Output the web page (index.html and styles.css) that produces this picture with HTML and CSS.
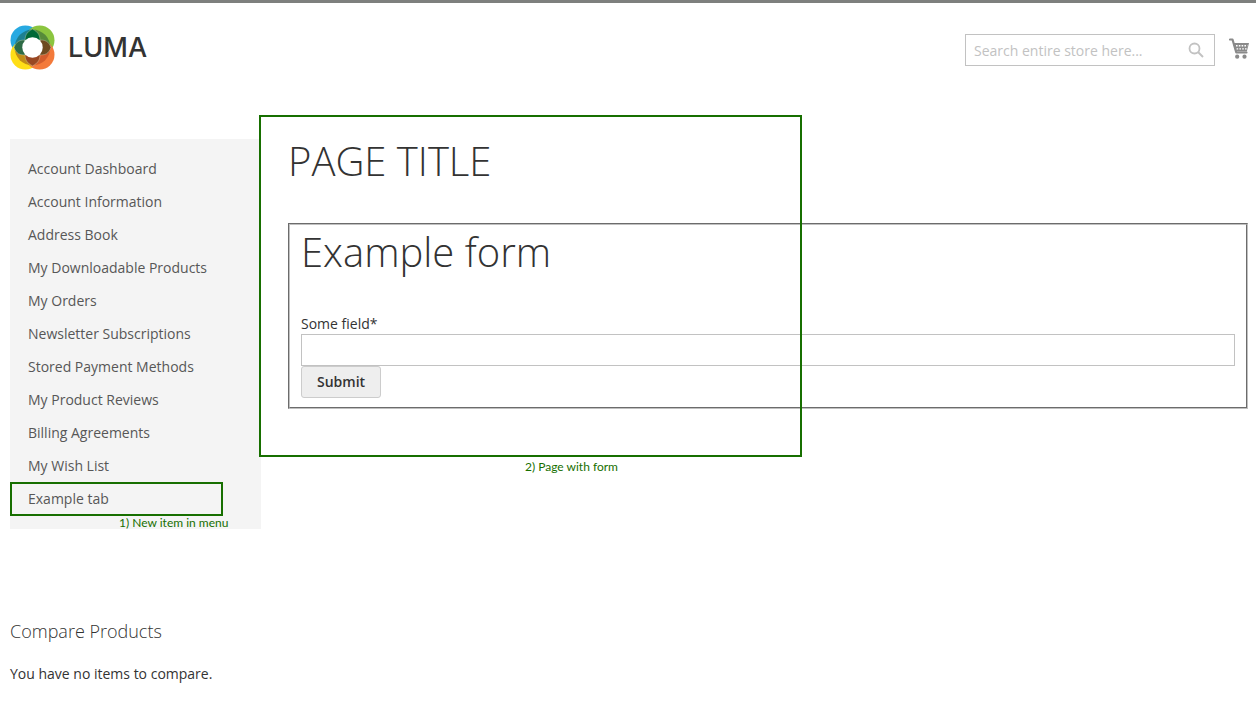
FILE: index.html
```html
<!DOCTYPE html>
<html lang="en">
<head>
<meta charset="utf-8">
<title>Page Title</title>
<link rel="stylesheet" href="styles.css">
</head>
<body>
<header class="header">
  <a class="logo" href="#" aria-label="Luma">
    <svg class="logo-mark" viewBox="0 0 44 44" aria-hidden="true">
      <defs>
        <clipPath id="ring-clip"><circle cx="22" cy="22" r="17.500"/></clipPath>
      </defs>
      <circle cx="15" cy="15" r="14.500" fill="#27a9e1"/>
      <circle cx="29" cy="15" r="14.500" fill="#8bc53f"/>
      <circle cx="15" cy="29" r="14.500" fill="#ffde17"/>
      <circle cx="29" cy="29" r="14.500" fill="#f37a3b"/>
      <g clip-path="url(#ring-clip)">
        <path d="M4 4h18v18H4z" fill="#1d8091"/>
        <path d="M22 4h18v18H22z" fill="#568b3a"/>
        <path d="M4 22h18v18H4z" fill="#c18c16"/>
        <path d="M22 22h18v18H22z" fill="#d35c2c"/>
      </g>
      <g stroke="#c9d6b4" stroke-width=".4">
        <path d="M4 22c2-6 6-8 12-7v14c-6 1-10-1-12-7" fill="#2d6b46"/>
        <path d="M40 22c-2-6-6-8-12-7v14c6 1 10-1 12-7" fill="#6d4a20"/>
        <path d="M22 4c6 3 8 7 7 13H15c-1-6 1-10 7-13" fill="#006837"/>
        <path d="M22 40c-6-3-8-7-7-13h14c1 6-1 10-7 13" fill="#994722"/>
      </g>
      <circle cx="22" cy="22" r="10" fill="#fff"/>
    </svg>
    <span class="logo-name">LUMA</span>
  </a>
  <form class="header-tools" role="search">
    <div class="search">
      <input class="search-input" type="search" aria-label="Search" placeholder="Search entire store here...">
      <button class="icon-button" type="button" aria-label="Search">
        <svg class="search-icon" viewBox="0 0 16 16" aria-hidden="true"><circle cx="6.500" cy="6.500" r="5" fill="none" stroke="#c2c2c2" stroke-width="1.800"/><path d="M10 10l5 5" stroke="#c2c2c2" stroke-width="2"/></svg>
      </button>
    </div>
    <a class="cart" href="#" aria-label="My cart">
      <svg class="cart-icon" viewBox="0 0 20 21" aria-hidden="true">
        <path d="M1 1.500h2.500L7.300 14.500h10.200" fill="none" stroke="#8a8a8a" stroke-width="2.200" stroke-linecap="round" stroke-linejoin="round"/>
        <path d="M4 5h16l-2.200 8.500H6.500z" fill="#8a8a8a"/>
        <path d="M7 7.800h11.500M7.600 10.900h10" stroke="#fff" stroke-width="1.400" stroke-dasharray="1.600 1.200"/>
        <circle cx="8.200" cy="18.700" r="2.100" fill="#8a8a8a"/><circle cx="15.500" cy="18.700" r="2.100" fill="#8a8a8a"/>
      </svg>
    </a>
  </form>
</header>
<div class="columns">
  <aside class="sidebar">
    <nav class="account-nav" aria-label="Account">
      <ul class="nav-list">
        <li class="nav-item"><a href="#">Account Dashboard</a></li>
        <li class="nav-item"><a href="#">Account Information</a></li>
        <li class="nav-item"><a href="#">Address Book</a></li>
        <li class="nav-item"><a href="#">My Downloadable Products</a></li>
        <li class="nav-item"><a href="#">My Orders</a></li>
        <li class="nav-item"><a href="#">Newsletter Subscriptions</a></li>
        <li class="nav-item"><a href="#">Stored Payment Methods</a></li>
        <li class="nav-item"><a href="#">My Product Reviews</a></li>
        <li class="nav-item"><a href="#">Billing Agreements</a></li>
        <li class="nav-item"><a href="#">My Wish List</a></li>
        <li class="nav-item marked"><a href="#">Example tab</a><span class="mark mark-tab"></span><span class="note note-tab">1) New item in menu</span></li>
      </ul>
    </nav>
    <section class="compare">
      <h2 class="compare-title">Compare Products</h2>
      <p class="compare-text">You have no items to compare.</p>
    </section>
  </aside>
  <main class="content">
    <h1 class="title">PAGE TITLE</h1>
    <form class="example-form">
      <h2 class="title form-title">Example form</h2>
      <label class="field-label" for="some-field">Some field*</label>
      <input class="field-input" id="some-field" type="text">
      <button class="submit" type="button">Submit</button>
    </form>
    <span class="mark mark-page"></span>
    <span class="note note-page">2) Page with form</span>
  </main>
</div>
</body>
</html>
```
FILE: styles.css
```css
* { box-sizing: border-box; }
body {
  margin: 0;
  border-top: 3px solid #7e807e;
  font: 14px/20px "Open Sans", "Noto Sans", sans-serif;
  color: #333;
  background: #fff;
}
a { color: inherit; text-decoration: none; }
.header {
  display: flex;
  justify-content: space-between;
  align-items: flex-start;
  padding: 22px 7px 0 10px;
}
.logo { display: flex; align-items: center; gap: 13px; }
.logo-mark { width: 45px; height: 45px; }
.logo-name { font: 500 27px/44px Inter, sans-serif; color: #333; }
.header-tools { display: flex; align-items: center; gap: 14px; padding-top: 9px; }
.search {
  display: flex;
  align-items: center;
  width: 250px;
  height: 32px;
  border: 1px solid #c2c2c2;
  padding: 0 10px 0 8px;
}
.search-input {
  flex: 1;
  min-width: 0;
  border: 0;
  padding: 2px 0 0;
  font: inherit;
  background: none;
}
.search-input::placeholder { color: #c2c2c2; }
.icon-button { display: flex; border: 0; padding: 0; background: none; }
.search-icon { width: 16px; height: 16px; }
.cart { display: flex; padding-bottom: 3px; }
.cart-icon { width: 20px; height: 21px; }
.columns {
  display: grid;
  grid-template-columns: 251px 1fr;
  gap: 27px;
  padding: 69px 8px 16px 10px;
}
.account-nav { background: #f4f4f4; padding: 13px 0 14px; }
.nav-list { list-style: none; margin: 0; padding: 0; }
.nav-item { padding: 7px 18px 6px; color: #575757; }
.marked { position: relative; }
.compare { padding-top: 90px; }
.compare-title { margin: 0 0 21px; font-size: 18px; line-height: 24px; font-weight: 300; }
.compare-text { margin: 0; }
.content { position: relative; min-width: 0; }
.title { margin: 0; font-size: 40px; line-height: 44px; font-weight: 300; }
.example-form {
  margin-top: 40px;
  border: 2px groove #c0c0c0;
  padding: 5px 11px 9px;
}
.form-title { margin-bottom: 40px; }
.field-label { display: block; }
.field-input {
  display: block;
  width: 100%;
  height: 32px;
  border: 1px solid #c2c2c2;
  padding: 0 9px;
  font: inherit;
  background: #fff;
}
.submit {
  display: block;
  border: 1px solid #ccc;
  border-radius: 3px;
  padding: 7px 15px;
  font: 600 14px/16px "Open Sans", "Noto Sans", sans-serif;
  color: #333;
  background: #eee;
}
.mark { position: absolute; border: 2px solid #176f00; pointer-events: none; }
.note { position: absolute; font: 12px/14px Lato, sans-serif; color: #176f00; white-space: nowrap; }
.mark-tab { left: 0; top: 0; width: 213px; height: 34px; }
.note-tab { left: 109px; top: 34px; }
.mark-page { left: -29px; top: -24px; width: 543px; height: 342px; }
.note-page { left: 237px; top: 321px; }
```
